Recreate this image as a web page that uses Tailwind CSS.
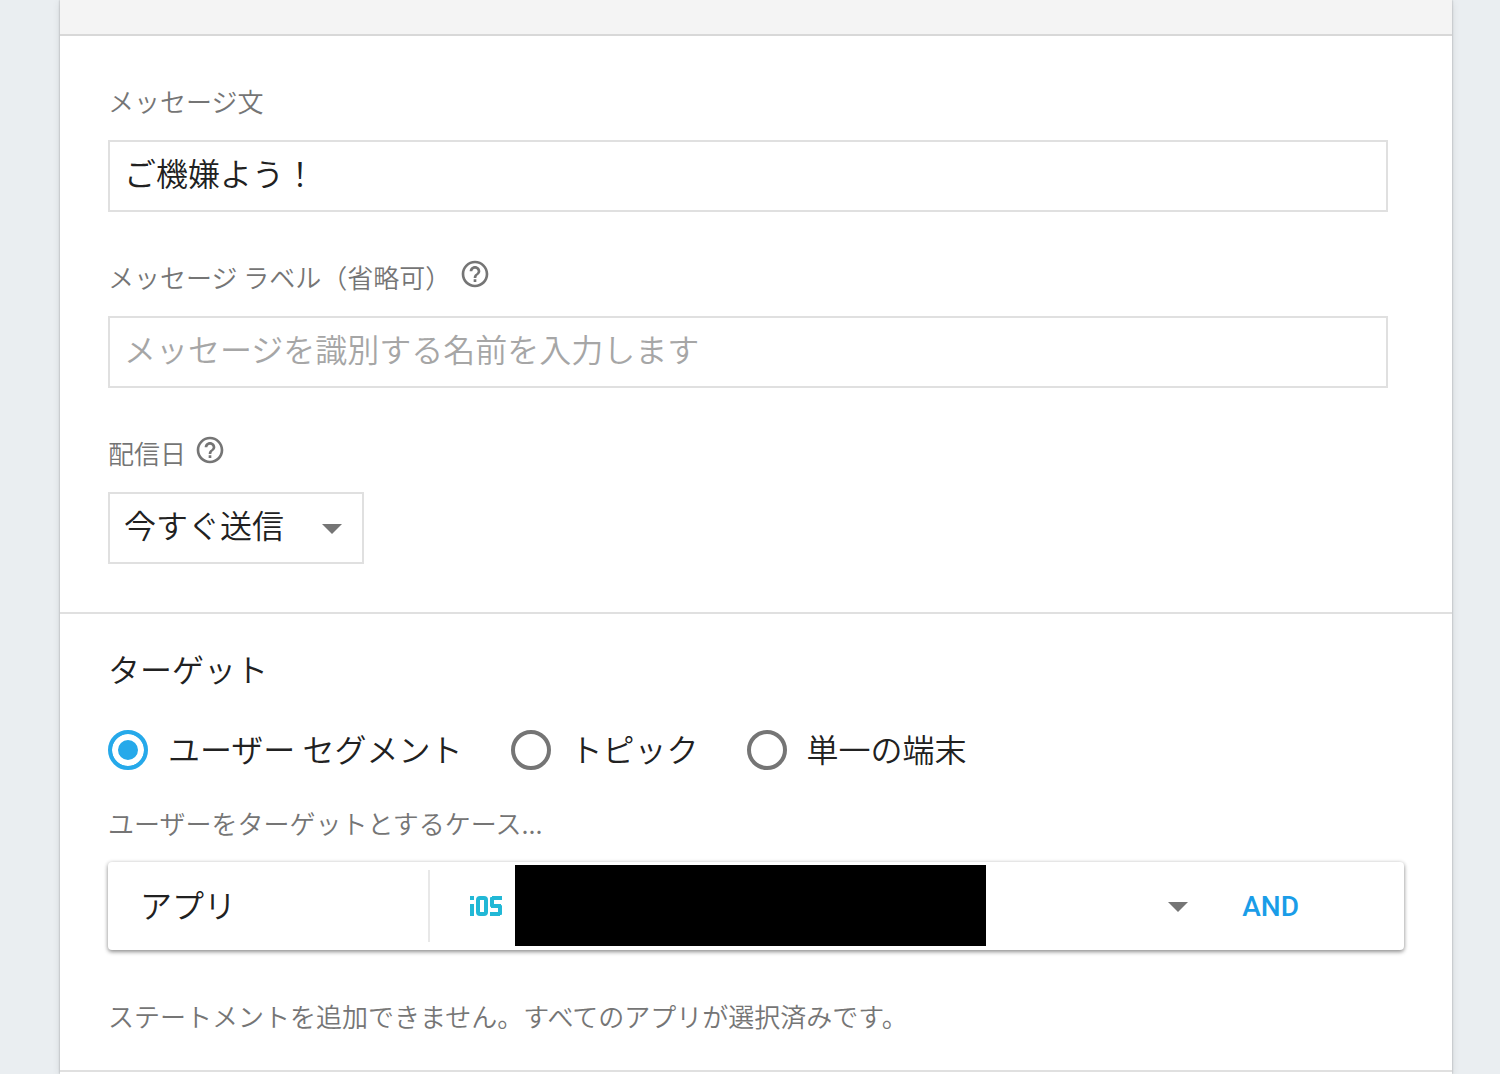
<!DOCTYPE html>
<html lang="ja">
<head>
  <meta charset="UTF-8" />
  <meta name="viewport" content="width=device-width, initial-scale=1.0" />
  <title>メッセージの作成</title>
  <script src="https://cdn.jsdelivr.net/npm/@tailwindcss/browser@4"></script>
</head>
<body class="bg-[#eaeef1] font-['Noto_Sans_CJK_JP',sans-serif] font-[350] text-[#212121] text-[32px] leading-12">
  <main class="ml-15 mr-12 min-h-screen bg-white shadow-[0_2px_8px_rgba(0,0,0,0.1),0_0_2px_rgba(0,0,0,0.3)]">
    <header class="h-9 bg-[#f4f4f4] border-b-2 border-[#d8d8d8]"></header>

    <form>
      <!-- message -->
      <section class="flex flex-col gap-12 pt-12 pb-12 pl-12 pr-16 border-b-2 border-[#e0e0e0]">
        <div class="flex flex-col gap-5">
          <label for="message" class="h-9 text-[26px] leading-[34px] text-[#757575]">メッセージ文</label>
          <input id="message" type="text" value="ご機嫌よう！" class="w-full h-18 px-3.5 pb-2 border-2 border-[#e0e0e0] outline-none" />
        </div>

        <div class="flex flex-col gap-5">
          <div class="flex items-center gap-2 h-9 text-[26px] leading-[34px] text-[#757575]">
            <label for="label" class="pb-0.5">メッセージ ラベル（省略可）</label>
            <svg class="size-8 mb-2 fill-[#757575]" viewBox="0 0 24 24"><path d="M11 18h2v-2h-2v2zm1-16C6.48 2 2 6.48 2 12s4.480 10 10 10 10-4.480 10-10S17.520 2 12 2zm0 18c-4.410 0-8-3.590-8-8s3.590-8 8-8 8 3.590 8 8-3.590 8-8 8zm0-14c-2.210 0-4 1.790-4 4h2c0-1.100.9-2 2-2s2 .9 2 2c0 2-3 1.750-3 5h2c0-2.250 3-2.500 3-5 0-2.210-1.790-4-4-4z" /></svg>
          </div>
          <input id="label" type="text" placeholder="メッセージを識別する名前を入力します" class="w-full h-18 px-3.5 pb-2 border-2 border-[#e0e0e0] outline-none placeholder:text-[#a6a6a6]" />
        </div>

        <div class="flex flex-col gap-5">
          <div class="flex items-center gap-2 h-9 text-[26px] leading-[34px] text-[#757575]">
            <label for="date" class="pb-0.5">配信日</label>
            <svg class="size-8 mb-2 fill-[#757575]" viewBox="0 0 24 24"><path d="M11 18h2v-2h-2v2zm1-16C6.48 2 2 6.48 2 12s4.480 10 10 10 10-4.480 10-10S17.520 2 12 2zm0 18c-4.410 0-8-3.590-8-8s3.590-8 8-8 8 3.590 8 8-3.590 8-8 8zm0-14c-2.210 0-4 1.790-4 4h2c0-1.100.9-2 2-2s2 .9 2 2c0 2-3 1.750-3 5h2c0-2.250 3-2.500 3-5 0-2.210-1.790-4-4-4z" /></svg>
          </div>
          <div class="relative w-64">
            <select id="date" class="block appearance-none w-full h-18 px-3.5 pb-2 border-2 border-[#e0e0e0]">
              <option>今すぐ送信</option>
            </select>
            <svg class="absolute right-5.5 top-8 w-5 h-2.5 fill-[#757575] pointer-events-none" viewBox="0 0 20 10"><path d="M0 0h20L10 10z" /></svg>
          </div>
        </div>
      </section>

      <!-- target -->
      <section class="px-12 pt-7.5 pb-9 border-b-2 border-[#e0e0e0]">
        <h2>ターゲット</h2>

        <div class="flex gap-12 pt-8">
          <label class="flex items-center gap-5 h-13">
            <input type="radio" name="target" checked class="appearance-none size-10 rounded-full border-4 border-[#757575] checked:border-[#26a9ea] checked:bg-[#26a9ea] checked:shadow-[inset_0_0_0_6px_#fff]" />
            <span class="pb-1">ユーザー セグメント</span>
          </label>
          <label class="flex items-center gap-5 h-13">
            <input type="radio" name="target" class="appearance-none size-10 rounded-full border-4 border-[#757575] checked:border-[#26a9ea] checked:bg-[#26a9ea] checked:shadow-[inset_0_0_0_6px_#fff]" />
            <span class="pb-1">トピック</span>
          </label>
          <label class="flex items-center gap-5 h-13">
            <input type="radio" name="target" class="appearance-none size-10 rounded-full border-4 border-[#757575] checked:border-[#26a9ea] checked:bg-[#26a9ea] checked:shadow-[inset_0_0_0_6px_#fff]" />
            <span class="pb-1">単一の端末</span>
          </label>
        </div>

        <p class="h-16 pt-7.5 text-[26px] leading-[34px] text-[#757575]">ユーザーをターゲットとするケース...</p>

        <div class="flex items-center h-22 mt-5.5 rounded-sm shadow-[0_2px_4px_rgba(0,0,0,0.4),0_0_4px_rgba(0,0,0,0.12)]">
          <label for="app" class="flex items-center w-80 h-18 pl-8 pb-1">アプリ</label>
          <div class="relative flex flex-1 items-center h-full before:w-0.5 before:h-18 before:bg-[#e8e8e8]">
            <svg class="w-8 h-5 ml-10 fill-[#22b8d6]" viewBox="0 0 32 20" role="img" aria-label="iOS">
              <rect width="4" height="4" />
              <rect y="8" width="4" height="12" />
              <rect x="8" y="2" width="8" height="16" rx="2" fill="none" stroke="#22b8d6" stroke-width="4" />
              <rect x="22" width="10" height="4" />
              <rect x="20" y="1" width="4" height="10" rx="1" />
              <rect x="21" y="8" width="10" height="4" />
              <rect x="28" y="9" width="4" height="10" rx="1" />
              <rect x="20" y="16" width="10" height="4" />
            </svg>
            <div class="w-[471px] h-[81px] ml-[13px] mb-0.5 bg-black"></div>
            <select id="app" class="appearance-none flex-1 h-18">
              <option></option>
            </select>
            <svg class="absolute right-0 bottom-[38px] w-5 h-2.5 fill-[#757575] pointer-events-none" viewBox="0 0 20 10"><path d="M0 0h20L10 10z" /></svg>
          </div>
          <button type="button" class="pt-0.5 pl-[54px] pr-[105px] font-[Roboto,sans-serif] font-medium text-[28px] text-[#1a9de8]">AND</button>
        </div>

        <p class="pt-12 text-[26px] leading-9 text-[#757575]">ステートメントを追加できません。すべてのアプリが選択済みです。</p>
      </section>
    </form>
  </main>
</body>
</html>
